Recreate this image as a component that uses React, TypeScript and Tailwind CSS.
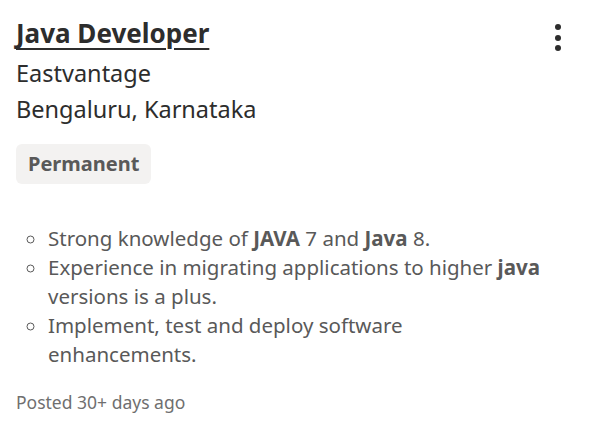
import React from 'react'

export default function App() {
  return (
    <div className="w-[593px] h-[428px] bg-white relative" style={{ fontFamily: '"Noto Sans", Lato, sans-serif' }}>
      <div className="pl-4 pt-[16px]">
        <div className="flex items-start justify-between">
          <a href="#" className="text-[26px] leading-[34px] font-bold text-[#2d2d2d] underline decoration-2 underline-offset-[5px]">
            Java Developer
          </a>
          <button className="mr-[32px] mt-[8px] flex flex-col gap-[4.5px] items-center">
            <span className="w-[6px] h-[6px] rounded-full bg-[#2d2d2d]" />
            <span className="w-[6px] h-[6px] rounded-full bg-[#2d2d2d]" />
            <span className="w-[6px] h-[6px] rounded-full bg-[#2d2d2d]" />
          </button>
        </div>
        <div className="mt-[4px] text-[23.5px] leading-[36px] text-[#2d2d2d]">Eastvantage</div>
        <div className="text-[23.5px] leading-[36px] text-[#2d2d2d]">Bengaluru, Karnataka</div>
        <div className="mt-[17px]">
          <span className="inline-block bg-[#f3f2f1] rounded-[6px] px-[12px] h-[40px] leading-[40px] text-[20px] font-bold text-[#595959]">
            Permanent
          </span>
        </div>
        <ul className="mt-[40px] pl-[32px] w-[524px] text-[20.5px] leading-[29px] text-[#595959]" style={{ listStyleType: 'circle' }}>
          <li>Strong knowledge of <b>JAVA</b> 7 and <b>Java</b> 8.</li>
          <li>Experience in migrating applications to higher <b>java</b> versions is a plus.</li>
          <li>Implement, test and deploy software enhancements.</li>
        </ul>
        <div className="mt-[21px] text-[17.5px] leading-[24px] text-[#6f6f6f]">Posted 30+ days ago</div>
      </div>
    </div>
  )
}
